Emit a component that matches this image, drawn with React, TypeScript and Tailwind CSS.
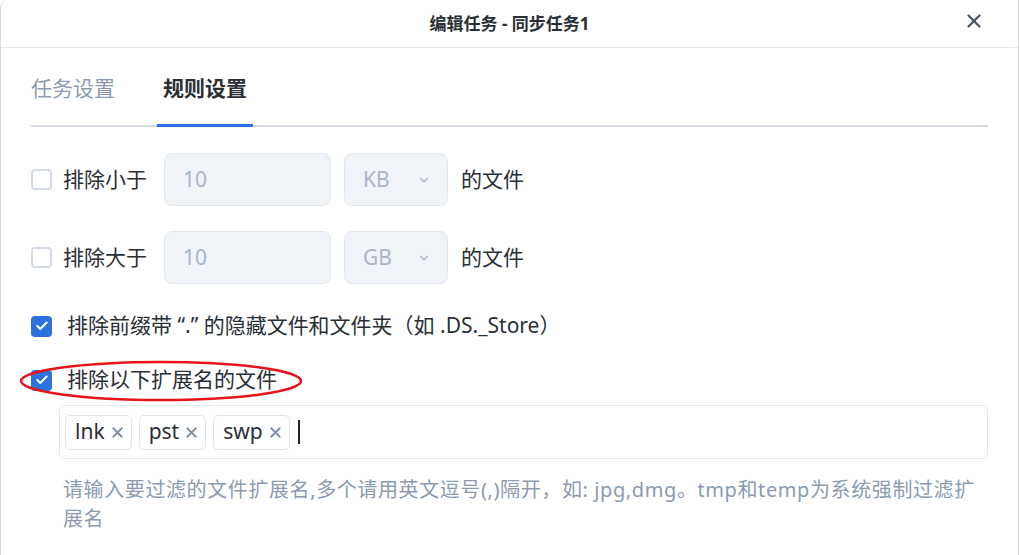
import { Check, ChevronDown, X } from "lucide-react";

const font = { fontFamily: '"Noto Sans", "Noto Sans CJK SC", sans-serif' };

function Box({ checked }: { checked?: boolean }) {
  return checked ? (
    <span className="flex h-[21px] w-[21px] shrink-0 items-center justify-center rounded-[4px] bg-[#2a72de]">
      <Check className="h-[14px] w-[14px] text-white" strokeWidth={3.5} />
    </span>
  ) : (
    <span className="h-[21px] w-[21px] shrink-0 rounded-[4px] border-2 border-[#d3dbe6] bg-white" />
  );
}

function SizeRow({ label, unit }: { label: string; unit: string }) {
  return (
    <div className="flex h-[53px] items-center">
      <Box />
      <span className="ml-[11px] w-[101px] text-[21px] text-[#2a2f36]">{label}</span>
      <div className="flex h-[53px] w-[167px] items-center rounded-[8px] border border-[#e3e8ef] bg-[#f0f3f8] px-[18px] text-[21px] text-[#a8b6c8]">
        10
      </div>
      <div className="ml-[13px] flex h-[53px] w-[104px] items-center justify-between rounded-[8px] border border-[#e3e8ef] bg-[#f0f3f8] pl-[18px] pr-[16px] text-[21px] text-[#a8b6c8]">
        {unit}
        <ChevronDown className="h-[14px] w-[14px]" strokeWidth={2} />
      </div>
      <span className="ml-[13px] text-[21px] text-[#2a2f36]">的文件</span>
    </div>
  );
}

function Tag({ text }: { text: string }) {
  return (
    <span className="flex h-[35px] items-center gap-[4px] rounded-[5px] border border-[#dfe4eb] bg-white pl-[9px] pr-[5px] text-[21px] text-[#2a2f36]">
      {text}
      <X className="h-[17px] w-[17px] text-[#7f8da3]" strokeWidth={2.5} />
    </span>
  );
}

export default function App() {
  return (
    <div className="h-[555px] w-[1020px] overflow-hidden bg-white" style={font}>
      <div className="h-full w-[1019px] rounded-tl-[8px] border-x border-[#d6dbe2] bg-white">
        <div className="relative flex h-[48px] items-center justify-center border-b border-[#e4e9f0]">
          <span className="text-[17px] font-bold text-[#2a2f36]">编辑任务 - 同步任务1</span>
          <X className="absolute right-[33px] top-[10px] h-[22px] w-[22px] text-[#4a5566]" strokeWidth={2.5} />
        </div>

        <div className="px-[30px]">
          <div className="flex h-[79px] items-end gap-[42px] border-b-2 border-[#d5dce6]">
            <span className="pb-[21px] text-[21px] text-[#8a9bb2]">任务设置</span>
            <span className="relative -mb-[2px] border-b-[3px] border-[#2a72de] px-[6px] pb-[20px] text-[21px] font-bold text-[#2a2f36]">
              规则设置
            </span>
          </div>

          <div className="mt-[26px] flex flex-col gap-[25px]">
            <SizeRow label="排除小于" unit="KB" />
            <SizeRow label="排除大于" unit="GB" />
          </div>

          <div className="mt-[22px] flex h-[40px] items-center gap-[15px] text-[21px] text-[#2a2f36]">
            <Box checked />
            <span>排除前缀带 “.” 的隐藏文件和文件夹（如 .DS._Store）</span>
          </div>

          <div className="relative mt-[14px] flex h-[40px] items-center gap-[15px] text-[21px] text-[#2a2f36]">
            <Box checked />
            <span>排除以下扩展名的文件</span>
            <svg className="absolute left-[-13px] top-[-1px]" width="286" height="46" viewBox="0 0 286 46">
              <ellipse cx="143" cy="22" rx="140" ry="19" fill="none" stroke="#e8141c" strokeWidth="2.5" />
            </svg>
          </div>

          <div className="ml-[28px] mt-[5px] flex h-[54px] items-center gap-[7px] rounded-[6px] border border-[#e3e8ef] px-[5px]">
            <Tag text="lnk" />
            <Tag text="pst" />
            <Tag text="swp" />
            <span className="ml-[1px] h-[24px] w-[2px] bg-[#222]" />
          </div>

          <p className="ml-[32px] mt-[16px] pr-[2px] text-[20px] leading-[29px] tracking-[0.6px] text-[#8a9bb2]">
            请输入要过滤的文件扩展名,多个请用英文逗号(,)隔开，如: jpg,dmg。tmp和temp为系统强制过滤扩展名
          </p>
        </div>
      </div>
    </div>
  );
}
